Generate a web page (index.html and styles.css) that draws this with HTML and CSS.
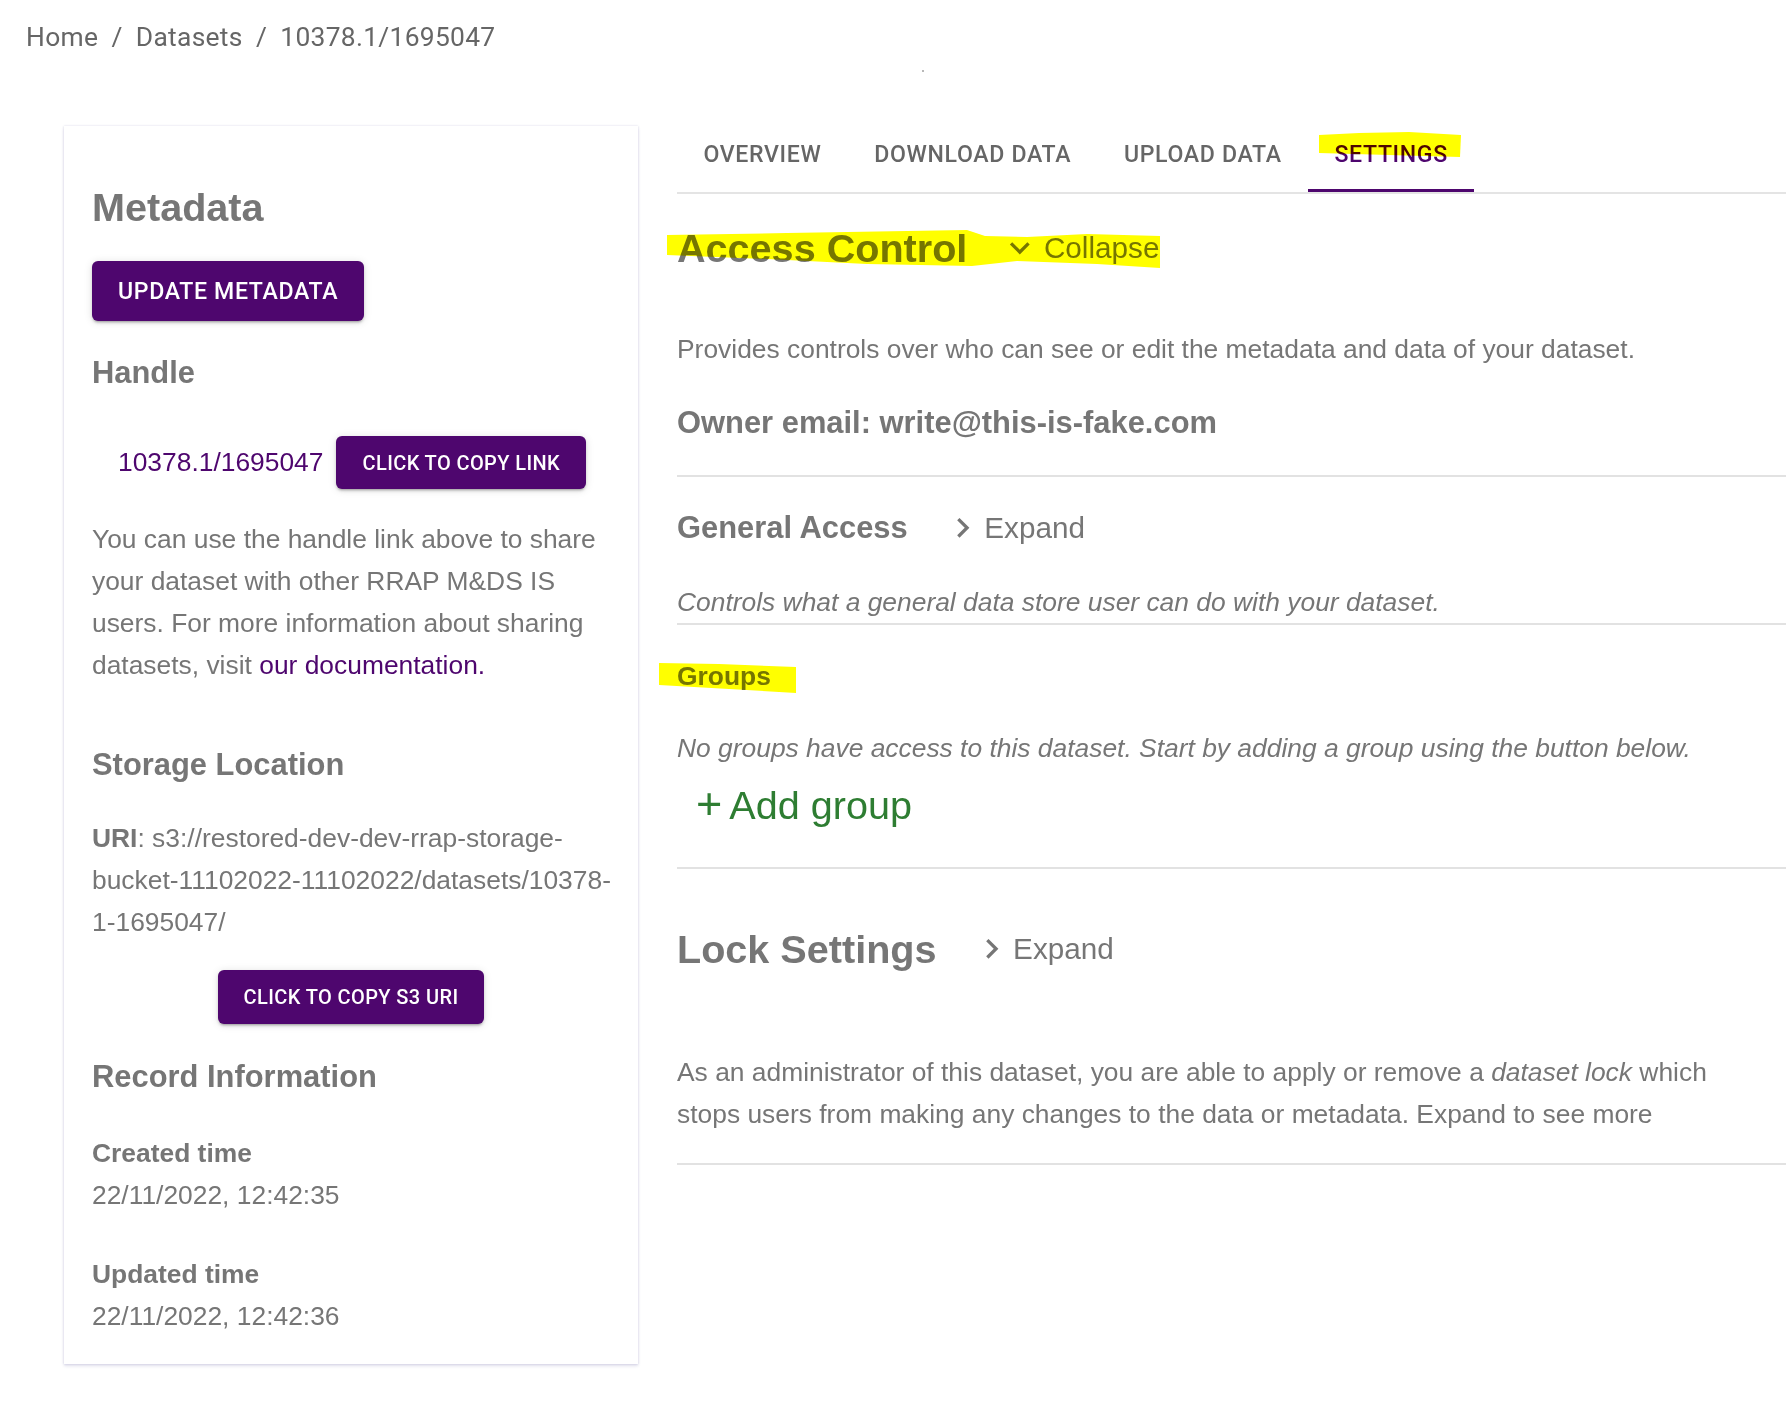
FILE: index.html
```html
<!DOCTYPE html>
<html lang="en">
<head>
<meta charset="utf-8">
<title>Dataset 10378.1/1695047</title>
<link rel="stylesheet" href="styles.css">
</head>
<body>
<nav class="breadcrumb">
  <span class="crumb">Home</span><span class="sep">/</span><span class="crumb">Datasets</span><span class="sep">/</span><span class="crumb">10378.1/1695047</span>
</nav>
<span class="stray-dot"></span>
<div class="page">
  <aside class="card">
    <h2 class="card-title">Metadata</h2>
    <button class="btn btn-lg">Update metadata</button>
    <h3 class="sub-title handle-title">Handle</h3>
    <div class="handle-row">
      <span class="handle-id">10378.1/1695047</span>
      <button class="btn btn-sm">Click to copy link</button>
    </div>
    <p class="body-text share-text">You can use the handle link above to share your dataset with other RRAP M&amp;DS IS users. For more information about sharing datasets, visit <a class="doc-link" href="#">our documentation.</a></p>
    <h3 class="sub-title storage-title">Storage Location</h3>
    <p class="body-text uri-text"><b>URI</b>: s3://restored-dev-dev-rrap-storage-bucket-11102022-11102022/datasets/10378-1-1695047/</p>
    <div class="center-row">
      <button class="btn btn-sm">Click to copy S3 URI</button>
    </div>
    <h3 class="sub-title record-title">Record Information</h3>
    <h4 class="field-label created-label">Created time</h4>
    <div class="field-value">22/11/2022, 12:42:35</div>
    <h4 class="field-label updated-label">Updated time</h4>
    <div class="field-value">22/11/2022, 12:42:36</div>
  </aside>

  <main class="content">
    <div class="tabs">
      <div class="tab">Overview</div>
      <div class="tab">Download data</div>
      <div class="tab">Upload data</div>
      <div class="tab tab-active">Settings<span class="hl hl-settings"></span><span class="indicator"></span></div>
    </div>

    <div class="section-head access-head">
      <h2 class="big-title">Access Control</h2>
      <span class="toggle toggle-collapse">
        <svg class="chev" viewBox="0 0 24 24"><path d="M16.59 8.59 12 13.17 7.41 8.59 6 10l6 6 6-6z"/></svg>Collapse
      </span>
      <span class="hl hl-access"></span>
    </div>
    <p class="body-text provides-text">Provides controls over who can see or edit the metadata and data of your dataset.</p>
    <h3 class="sub-title owner-title">Owner email: write@this-is-fake.com</h3>
    <hr class="divider owner-divider">

    <div class="section-head general-head">
      <h3 class="sub-title">General Access</h3>
      <span class="toggle toggle-expand">
        <svg class="chev" viewBox="0 0 24 24"><path d="M10 6 8.59 7.41 13.17 12l-4.58 4.59L10 18l6-6z"/></svg>Expand
      </span>
    </div>
    <p class="body-text italic general-text">Controls what a general data store user can do with your dataset.</p>
    <hr class="divider general-divider">

    <div class="groups-head">
      <h4 class="field-label groups-title">Groups</h4>
      <span class="hl hl-groups"></span>
    </div>
    <p class="body-text italic groups-text">No groups have access to this dataset. Start by adding a group using the button below.</p>
    <div class="add-group"><span class="plus">+</span>Add group</div>
    <hr class="divider groups-divider">

    <div class="section-head lock-head">
      <h2 class="big-title">Lock Settings</h2>
      <span class="toggle toggle-expand">
        <svg class="chev" viewBox="0 0 24 24"><path d="M10 6 8.59 7.41 13.17 12l-4.58 4.59L10 18l6-6z"/></svg>Expand
      </span>
    </div>
    <p class="body-text lock-text">As an administrator of this dataset, you are able to apply or remove a <i>dataset lock</i> which stops users from making any changes to the data or metadata. Expand to see more</p>
    <hr class="divider lock-divider">
  </main>
</div>
</body>
</html>
```

FILE: styles.css
```css
html, body {
  margin: 0;
  padding: 0;
  background: #ffffff;
}

body {
  width: 1786px;
  min-height: 1413px;
  font-family: "Liberation Sans", Arial, sans-serif;
  color: #767676;
  position: relative;
  overflow: hidden;
}

/* Breadcrumb */
.breadcrumb {
  font-family: Roboto, "Liberation Sans", sans-serif;
  font-size: 26.4px;
  line-height: 38px;
  height: 38px;
  padding: 18px 0 0 26px;
  color: #666666;
  letter-spacing: 0.3px;
}

.sep {
  margin: 0 13.2px;
}

.stray-dot {
  position: absolute;
  left: 922px;
  top: 70px;
  width: 2px;
  height: 2px;
  background: #b8b8b8;
}

/* Page layout */
.page {
  display: flex;
  align-items: flex-start;
  gap: 39px;
  margin-top: 60px;
  padding-left: 64px;
}

/* Left card */
.card {
  width: 574px;
  flex: none;
  box-sizing: border-box;
  margin-top: 10px;
  padding: 58px 24px 32px 28px;
  background: #fff;
  box-shadow: 0 2px 3px rgba(70, 60, 140, 0.16), 0 0 2px rgba(70, 60, 140, 0.18);
}

.card-title,
.big-title {
  margin: 0;
  font-size: 39.6px;
  line-height: 46px;
  font-weight: 700;
  color: #767676;
}

.sub-title {
  margin: 0;
  font-size: 30.9px;
  line-height: 36px;
  font-weight: 700;
  color: #767676;
}

.field-label {
  margin: 0;
  font-size: 26.4px;
  line-height: 32px;
  font-weight: 700;
  color: #767676;
}

.field-value {
  font-size: 26.4px;
  line-height: 32px;
}

.body-text {
  margin: 0;
  font-size: 26.4px;
  line-height: 42px;
}

.italic {
  font-style: italic;
}

/* Buttons */
.btn {
  display: inline-flex;
  align-items: center;
  justify-content: center;
  box-sizing: border-box;
  border: none;
  border-radius: 6px;
  background: #4e066e;
  color: #ffffff;
  font-family: Roboto, "Liberation Sans", sans-serif;
  font-weight: 500;
  text-transform: uppercase;
  cursor: pointer;
  box-shadow: 0 3px 2px -2px rgba(0, 0, 0, 0.2), 0 2px 3px 0 rgba(0, 0, 0, 0.14), 0 1px 8px 0 rgba(0, 0, 0, 0.12);
}

.btn-lg {
  margin-top: 31px;
  height: 60px;
  padding: 0 26px;
  font-size: 23.1px;
  letter-spacing: 0.66px;
}

.btn-sm {
  height: 53px;
  padding: 0 26px;
  font-size: 20px;
  letter-spacing: 0.4px;
}

.handle-title {
  margin-top: 34px;
}

.handle-row {
  display: flex;
  align-items: center;
  gap: 13px;
  margin-top: 45px;
  padding-left: 26px;
}

.handle-id {
  font-size: 26.4px;
  color: #4e066e;
}

.share-text {
  margin-top: 29px;
}

.doc-link {
  color: #4e066e;
  text-decoration: none;
}

.storage-title {
  margin-top: 61px;
}

.uri-text {
  margin-top: 34px;
}

.uri-text b {
  color: #767676;
}

.center-row {
  display: flex;
  justify-content: center;
  margin-top: 27px;
  padding-right: 4px;
}

.center-row .btn-sm {
  height: 54px;
}

.record-title {
  margin-top: 35px;
}

.created-label {
  margin-top: 42px;
}

.field-value {
  margin-top: 10px;
}

.updated-label {
  margin-top: 47px;
}

/* Right content */
.content {
  flex: 1;
  min-width: 0;
}

.tabs {
  display: flex;
  height: 76px;
  border-bottom: 2px solid #e4e4e4;
}

.tab {
  position: relative;
  display: flex;
  align-items: center;
  padding: 0 26.4px;
  font-family: Roboto, "Liberation Sans", sans-serif;
  font-size: 23.1px;
  font-weight: 500;
  letter-spacing: 0.66px;
  text-transform: uppercase;
  color: #666666;
}

.tab-active {
  color: #4e066e;
}

.indicator {
  position: absolute;
  left: 0;
  right: 0;
  bottom: 0;
  height: 3.5px;
  background: #4e066e;
}

/* Marker highlights (annotation overlay) */
.hl {
  position: absolute;
  background: #ffff00;
  mix-blend-mode: multiply;
  pointer-events: none;
}

.hl-settings {
  left: 11px;
  top: 16px;
  width: 142px;
  height: 26px;
  clip-path: polygon(0 3px, 40px 1px, 90px 0, 142px 3px, 141px 25px, 70px 23px, 0 21px);
}

.section-head {
  position: relative;
  display: flex;
  align-items: center;
}

.toggle {
  display: inline-flex;
  align-items: center;
  font-size: 29.7px;
  line-height: 40px;
  color: #767676;
}

.chev {
  width: 39.6px;
  height: 39.6px;
  fill: #767676;
  flex: none;
}

.toggle-collapse {
  margin-left: 33px;
  gap: 4px;
}

.toggle-expand {
  margin-left: 35px;
  gap: 2px;
}

.lock-head .toggle-expand {
  margin-left: 35px;
}

.access-head {
  margin-top: 31px;
}

.hl-access {
  left: -10px;
  top: 3px;
  width: 493px;
  height: 42px;
  clip-path: polygon(0 7px, 120px 5px, 240px 3px, 300px 2px, 318px 8px, 360px 9px, 420px 6px, 493px 8px, 493px 40px, 430px 36px, 350px 33px, 305px 38px, 200px 36px, 100px 31px, 0 27px);
}

.provides-text {
  margin-top: 57px;
}

.owner-title {
  margin-top: 35px;
}

.divider {
  margin: 0;
  border: none;
  height: 2px;
  background: #e2e2e2;
}

.owner-divider {
  margin-top: 34px;
}

.general-head {
  margin-top: 31px;
}

.general-text {
  margin-top: 33px;
}

.general-divider {
  margin-top: 0;
}

.groups-head {
  position: relative;
  margin-top: 35px;
}

.hl-groups {
  left: -18px;
  top: 2px;
  width: 137px;
  height: 31px;
  clip-path: polygon(0 1px, 60px 2px, 137px 5px, 137px 31px, 70px 27px, 0 23px);
}

.groups-text {
  margin-top: 35px;
}

.add-group {
  margin-top: 12px;
  padding-left: 19px;
  font-size: 39.6px;
  line-height: 46px;
  color: #2e7d32;
}

.plus {
  display: inline-block;
  font-size: 45px;
  margin-right: 7px;
}

.groups-divider {
  margin-top: 39px;
}

.lock-head {
  margin-top: 57px;
}

.lock-text {
  margin-top: 79px;
  padding-right: 24px;
}

.lock-divider {
  margin-top: 28px;
}
```
